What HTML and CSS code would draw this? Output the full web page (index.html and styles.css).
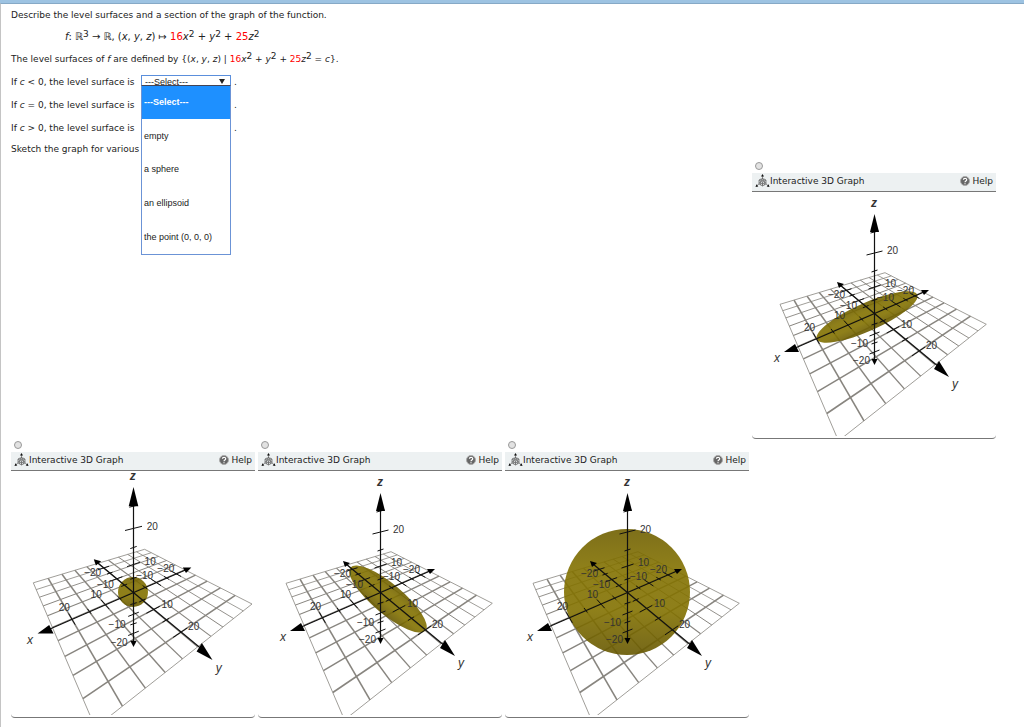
FILE: index.html
```html
<!DOCTYPE html>
<html lang="en">
<head>
    <meta charset="UTF-8">
    <meta name="viewport" content="width=device-width, initial-scale=1.0">
    <title>Level Surfaces</title>
    <link rel="stylesheet" href="styles.css">
</head>
<body>
    <!-- shared icons -->
    <svg class="defs" width="0" height="0" aria-hidden="true">
        <symbol id="icon-cube" viewBox="0 0 14 14">
            <g fill="none" stroke="#444" stroke-width="0.6">
                <path d="M7 1V5M4 9.500L1 12M10 9.500L13 12"/>
                <path d="M7 4.500L10.500 6V10L7 12L3.500 10V6ZM3.500 6L7 7.800L10.500 6M7 7.800V12M5.200 5.200L8.800 7V11M8.800 5.200L5.200 7V11M3.500 8L7 10L10.500 8"/>
            </g>
            <path fill="#111" d="M7 0L8.500 2.500H5.500ZM0 13L1 10.200L2.800 12.500ZM14 13L13 10.200L11.200 12.500Z"/>
        </symbol>
        <symbol id="icon-help" viewBox="0 0 10 10">
            <circle cx="5" cy="5" r="4.500" fill="#666" stroke="#aaa"/>
            <path d="M3.400 3.800C3.400 1.800 6.700 1.800 6.700 3.700C6.700 5 5 4.800 5 6.200M5 7.200V8.200" fill="none" stroke="#fff" stroke-width="1.200"/>
        </symbol>
        <linearGradient id="surface" x1="0" y1="0" x2="0" y2="1">
            <stop offset="0" stop-color="#6f5f00"/>
            <stop offset="0.300" stop-color="#827100"/>
            <stop offset="0.650" stop-color="#827100"/>
            <stop offset="1" stop-color="#665700"/>
        </linearGradient>
    </svg>

    <div class="question">
        <p>Describe the level surfaces and a section of the graph of the function.</p>
        <p class="formula"><i>f</i>: ℝ<sup>3</sup> → ℝ, (<i>x</i>, <i>y</i>, <i>z</i>) ↦ <b>16</b><i>x</i><sup>2</sup> + <i>y</i><sup>2</sup> + <b>25</b><i>z</i><sup>2</sup></p>
        <p>The level surfaces of <i>f</i> are defined by {(<i>x</i>, <i>y</i>, <i>z</i>) | <b>16</b><i>x</i><sup>2</sup> + <i>y</i><sup>2</sup> + <b>25</b><i>z</i><sup>2</sup> = <i>c</i>}.</p>

        <div class="case">
            <label for="negative">If <i>c</i> &lt; 0, the level surface is</label>
            <div class="dropdown">
                <select id="negative"><option>---Select---</option></select>
                <ul class="options">
                    <li class="selected">---Select---</li>
                    <li>empty</li>
                    <li>a sphere</li>
                    <li>an ellipsoid</li>
                    <li>the point (0, 0, 0)</li>
                </ul>
            </div>
            <span>.</span>
        </div>
        <div class="case">
            <label for="zero">If <i>c</i> = 0, the level surface is</label>
            <div class="dropdown"><select id="zero"></select></div>
            <span>.</span>
        </div>
        <div class="case">
            <label for="positive">If <i>c</i> &gt; 0, the level surface is</label>
            <div class="dropdown"><select id="positive"></select></div>
            <span>.</span>
        </div>
        <p class="sketch">Sketch the graph for various</p>

        <div class="graphs">
            <div class="graph first">
                <input type="radio" name="graph" aria-label="Graph 1">
                <div class="graph-header">
                    <svg class="cube"><use href="#icon-cube"/></svg>
                    <span>Interactive 3D Graph</span>
                    <a href="#"><svg class="help"><use href="#icon-help"/></svg>Help</a>
                </div>
                <div class="graph-body">
                    <svg class="plot" data-scale="1" data-shape="114,125,55,14,-24"></svg>
                </div>
            </div>
            <div class="graph">
                <input type="radio" name="graph" aria-label="Graph 2">
                <div class="graph-header">
                    <svg class="cube"><use href="#icon-cube"/></svg>
                    <span>Interactive 3D Graph</span>
                    <a href="#"><svg class="help"><use href="#icon-help"/></svg>Help</a>
                </div>
                <div class="graph-body">
                    <svg class="plot" data-scale="1.060" data-shape="121,121,15,15,0"></svg>
                </div>
            </div>
            <div class="graph">
                <input type="radio" name="graph" aria-label="Graph 3">
                <div class="graph-header">
                    <svg class="cube"><use href="#icon-cube"/></svg>
                    <span>Interactive 3D Graph</span>
                    <a href="#"><svg class="help"><use href="#icon-help"/></svg>Help</a>
                </div>
                <div class="graph-body">
                    <svg class="plot" data-scale="1" data-shape="129,128,49,15,40"></svg>
                </div>
            </div>
            <div class="graph">
                <input type="radio" name="graph" aria-label="Graph 4">
                <div class="graph-header">
                    <svg class="cube"><use href="#icon-cube"/></svg>
                    <span>Interactive 3D Graph</span>
                    <a href="#"><svg class="help"><use href="#icon-help"/></svg>Help</a>
                </div>
                <div class="graph-body">
                    <svg class="plot" data-scale="1" data-shape="121,121,63,63,0"></svg>
                </div>
            </div>
        </div>
    </div>

    <script src="graph.js"></script>
</body>
</html>
```
FILE: styles.css
```css
* {
    margin: 0;
    padding: 0;
    box-sizing: border-box;
}

body {
    font-family: "DejaVu Sans", Verdana, sans-serif;
    font-size: 9px;
    color: #222;
    background-color: #ffffff;
    border-top: 3px solid #9dc3e2;
    min-height: 100vh;
    display: flex;
    flex-direction: column;
}

.defs {
    position: absolute;
}

.question {
    flex: 1;
    border-top: 1px solid #86a9c6;
    border-left: 1px solid #c4c4c4;
    padding-left: 10px;
}

.question p {
    line-height: 22px;
    white-space: nowrap;
}

.question .formula {
    padding-left: 54px;
    font-size: 10px;
}

.question .sketch {
    line-height: 21px;
}

b {
    color: #ff0000;
    font-weight: 400;
}

sup {
    font-size: 9px;
    line-height: 0;
    vertical-align: 3px;
}

.case {
    display: flex;
    align-items: center;
    gap: 3px;
    height: 23px;
}

.case label {
    width: 127px;
    white-space: nowrap;
}

.dropdown {
    position: relative;
    width: 90px;
    height: 14px;
}

.dropdown select {
    display: block;
    width: 100%;
    height: 14px;
    padding-left: 3px;
    border: 1px solid #5b8fdc;
    appearance: none;
    background-color: #ffffff;
    font-family: "Liberation Sans", Arial, sans-serif;
    font-size: 9px;
    line-height: 12px;
    color: #222;
}

.dropdown::after {
    content: "";
    position: absolute;
    top: 4px;
    right: 6px;
    border: 3px solid transparent;
    border-top: 5px solid #222;
    border-bottom: none;
}

.options {
    position: absolute;
    z-index: 2;
    top: 10px;
    left: 0;
    width: 90px;
    height: 170px;
    display: grid;
    grid-auto-rows: 1fr;
    list-style: none;
    background-color: #ffffff;
    border: 1px solid #6b93d6;
    border-top-color: #445;
    font-family: "Liberation Sans", Arial, sans-serif;
    font-size: 9px;
}

.options li {
    display: flex;
    align-items: center;
    padding-left: 2px;
    white-space: nowrap;
}

.options .selected {
    background-color: #1e90ff;
    color: #ffffff;
    font-weight: 700;
}

.graphs {
    display: grid;
    grid-template-columns: repeat(4, 244px);
    column-gap: 3px;
}

.graph.first {
    grid-column: 4;
}

.graph {
    display: flex;
    flex-direction: column;
}

.graph input {
    appearance: none;
    width: 8px;
    height: 8px;
    margin: 2px 0 3px 3px;
    border: 1px solid #999;
    border-radius: 50%;
    background-color: #e2e2e2;
}

.graph-header {
    display: flex;
    align-items: center;
    height: 19px;
    padding: 0 3px 2px;
    background-color: #edf1f2;
    border-bottom: 1px solid #777;
}

.graph-header a {
    display: flex;
    align-items: center;
    gap: 2px;
    margin-left: auto;
    color: #222;
    text-decoration: none;
}

.cube {
    width: 15px;
    height: 14px;
}

.help {
    width: 10px;
    height: 10px;
}

.graph-body {
    height: 247px;
    padding-left: 1px;
    border-bottom: 1px solid #777;
    border-radius: 0 0 4px 4px;
}

.plot {
    display: block;
    width: 100%;
    height: 244px;
    font-family: "Liberation Sans", Arial, sans-serif;
    font-size: 10px;
    fill: #333;
}

.plot .grid {
    stroke: #88857f;
}

.plot .axes {
    stroke: #111;
    stroke-width: 1;
}

.plot .heads {
    fill: #000;
}

.plot .surface {
    fill: url(#surface);
    opacity: 0.9;
}

.plot .name {
    font-size: 12px;
    font-style: italic;
}

.plot .up {
    font-weight: 700;
}
```
FILE: graph.js
```js
// Corners of the xy plane (x and y run from -25 to 25) as seen by the camera
const TOP = [132, 80.700];
const LEFT = [27, 112.300];
const BOTTOM = [85.500, 248.900];
const RIGHT = [233.300, 132.300];
const ORIGIN = [121.500, 120.700];

const dx1 = LEFT[0] - BOTTOM[0], dx2 = RIGHT[0] - BOTTOM[0];
const dy1 = LEFT[1] - BOTTOM[1], dy2 = RIGHT[1] - BOTTOM[1];
const sx = TOP[0] - LEFT[0] + BOTTOM[0] - RIGHT[0];
const sy = TOP[1] - LEFT[1] + BOTTOM[1] - RIGHT[1];
const det = dx1 * dy2 - dx2 * dy1;
const g = (sx * dy2 - dx2 * sy) / det;
const h = (dx1 * sy - sx * dy1) / det;

// Plane coordinates to picture coordinates
function project(x, y) {
    const s = (x + 25) / 50, t = (y + 25) / 50;
    const w = g * s + h * t + 1;
    return [0, 1].map(i =>
        ((LEFT[i] - TOP[i] + g * LEFT[i]) * s + (RIGHT[i] - TOP[i] + h * RIGHT[i]) * t + TOP[i]) / w);
}

// z axis ticks: [height, half width, half rise]
const zTicks = [
    [40, 4, 1], [61, 8, 2], [79, 3, 1], [95, 6, 2], [108, 3, 1],
    [132, 3, 1], [142, 5, 2], [151, 3, 1], [160, 5, 2]
];

const heads = [
    [[121.500, 22], [117, 40], [126, 40]],
    [[121.500, 173], [118.500, 167], [124.500, 167]],
    [[31, 160], [42, 152], [46, 160]],
    [[196, 185], [181, 177], [186, 169]],
    [[176, 98], [168, 98], [171, 103]],
    [[84, 90], [91, 92], [86, 96]]
];

const labels = [
    ['20', 134, 62], ['10', 132, 95], ['−20', 144, 102], ['−20', 75, 106],
    ['−10', 87, 117], ['−10', 124, 109], ['10', 81, 127], ['20', 51, 139],
    ['10', 148, 136], ['20', 173, 157], ['−10', 98, 155], ['−20', 100, 172]
];

const names = [['z', 118, 15, 'name up'], ['x', 21, 170, 'name'], ['y', 199, 196, 'name']];

function draw(svg) {
    const scale = Number(svg.dataset.scale);
    const [cx, cy, rx, ry, angle] = svg.dataset.shape.split(',').map(Number);
    const fit = p => p.map((v, i) => (ORIGIN[i] + (v - ORIGIN[i]) * scale).toFixed(1));
    const line = (a, b, width) => {
        const [p, q] = [fit(a), fit(b)];
        return `<line x1="${p[0]}" y1="${p[1]}" x2="${q[0]}" y2="${q[1]}" stroke-width="${width}"/>`;
    };
    const text = ([label, x, y, cls = '']) => {
        const p = fit([x, y]);
        return `<text class="${cls}" x="${p[0]}" y="${p[1]}">${label}</text>`;
    };

    let grid = '';
    for (let k = -25; k <= 25; k += 5) {
        // lines nearer to the viewer are thicker
        const width = Math.abs(k) === 25 ? 0.8 : 1.200 + k / 50;
        grid += line(project(k, -25), project(k, 25), width);
        grid += line(project(-25, k), project(25, k), width);
    }

    let axes = line([121.500, 36], [121.500, 170], 1.200);
    axes += line([171, 100], [40, 157], 1.200);
    axes += line([87, 93], [186, 175], 1.200);
    for (let k = -20; k <= 20; k += 5) {
        if (k === 0) continue;
        const half = k % 10 === 0 ? 2.500 : 1.200;
        axes += line(project(k, -half), project(k, half), 1);
        axes += line(project(-half, k), project(half, k), 1);
    }
    zTicks.forEach(([y, w, r]) => {
        axes += line([121.500 - w, y + r], [121.500 + w, y - r], 1);
    });

    svg.innerHTML = `
        <g class="grid">${grid}</g>
        <ellipse class="surface" cx="${cx}" cy="${cy}" rx="${rx}" ry="${ry}" transform="rotate(${angle} ${cx} ${cy})"/>
        <g class="axes">${axes}</g>
        <g class="heads">${heads.map(t => `<polygon points="${t.map(fit).join(' ')}"/>`).join('')}</g>
        ${labels.concat(names).map(text).join('')}`;
}

document.querySelectorAll('.plot').forEach(draw);
```
